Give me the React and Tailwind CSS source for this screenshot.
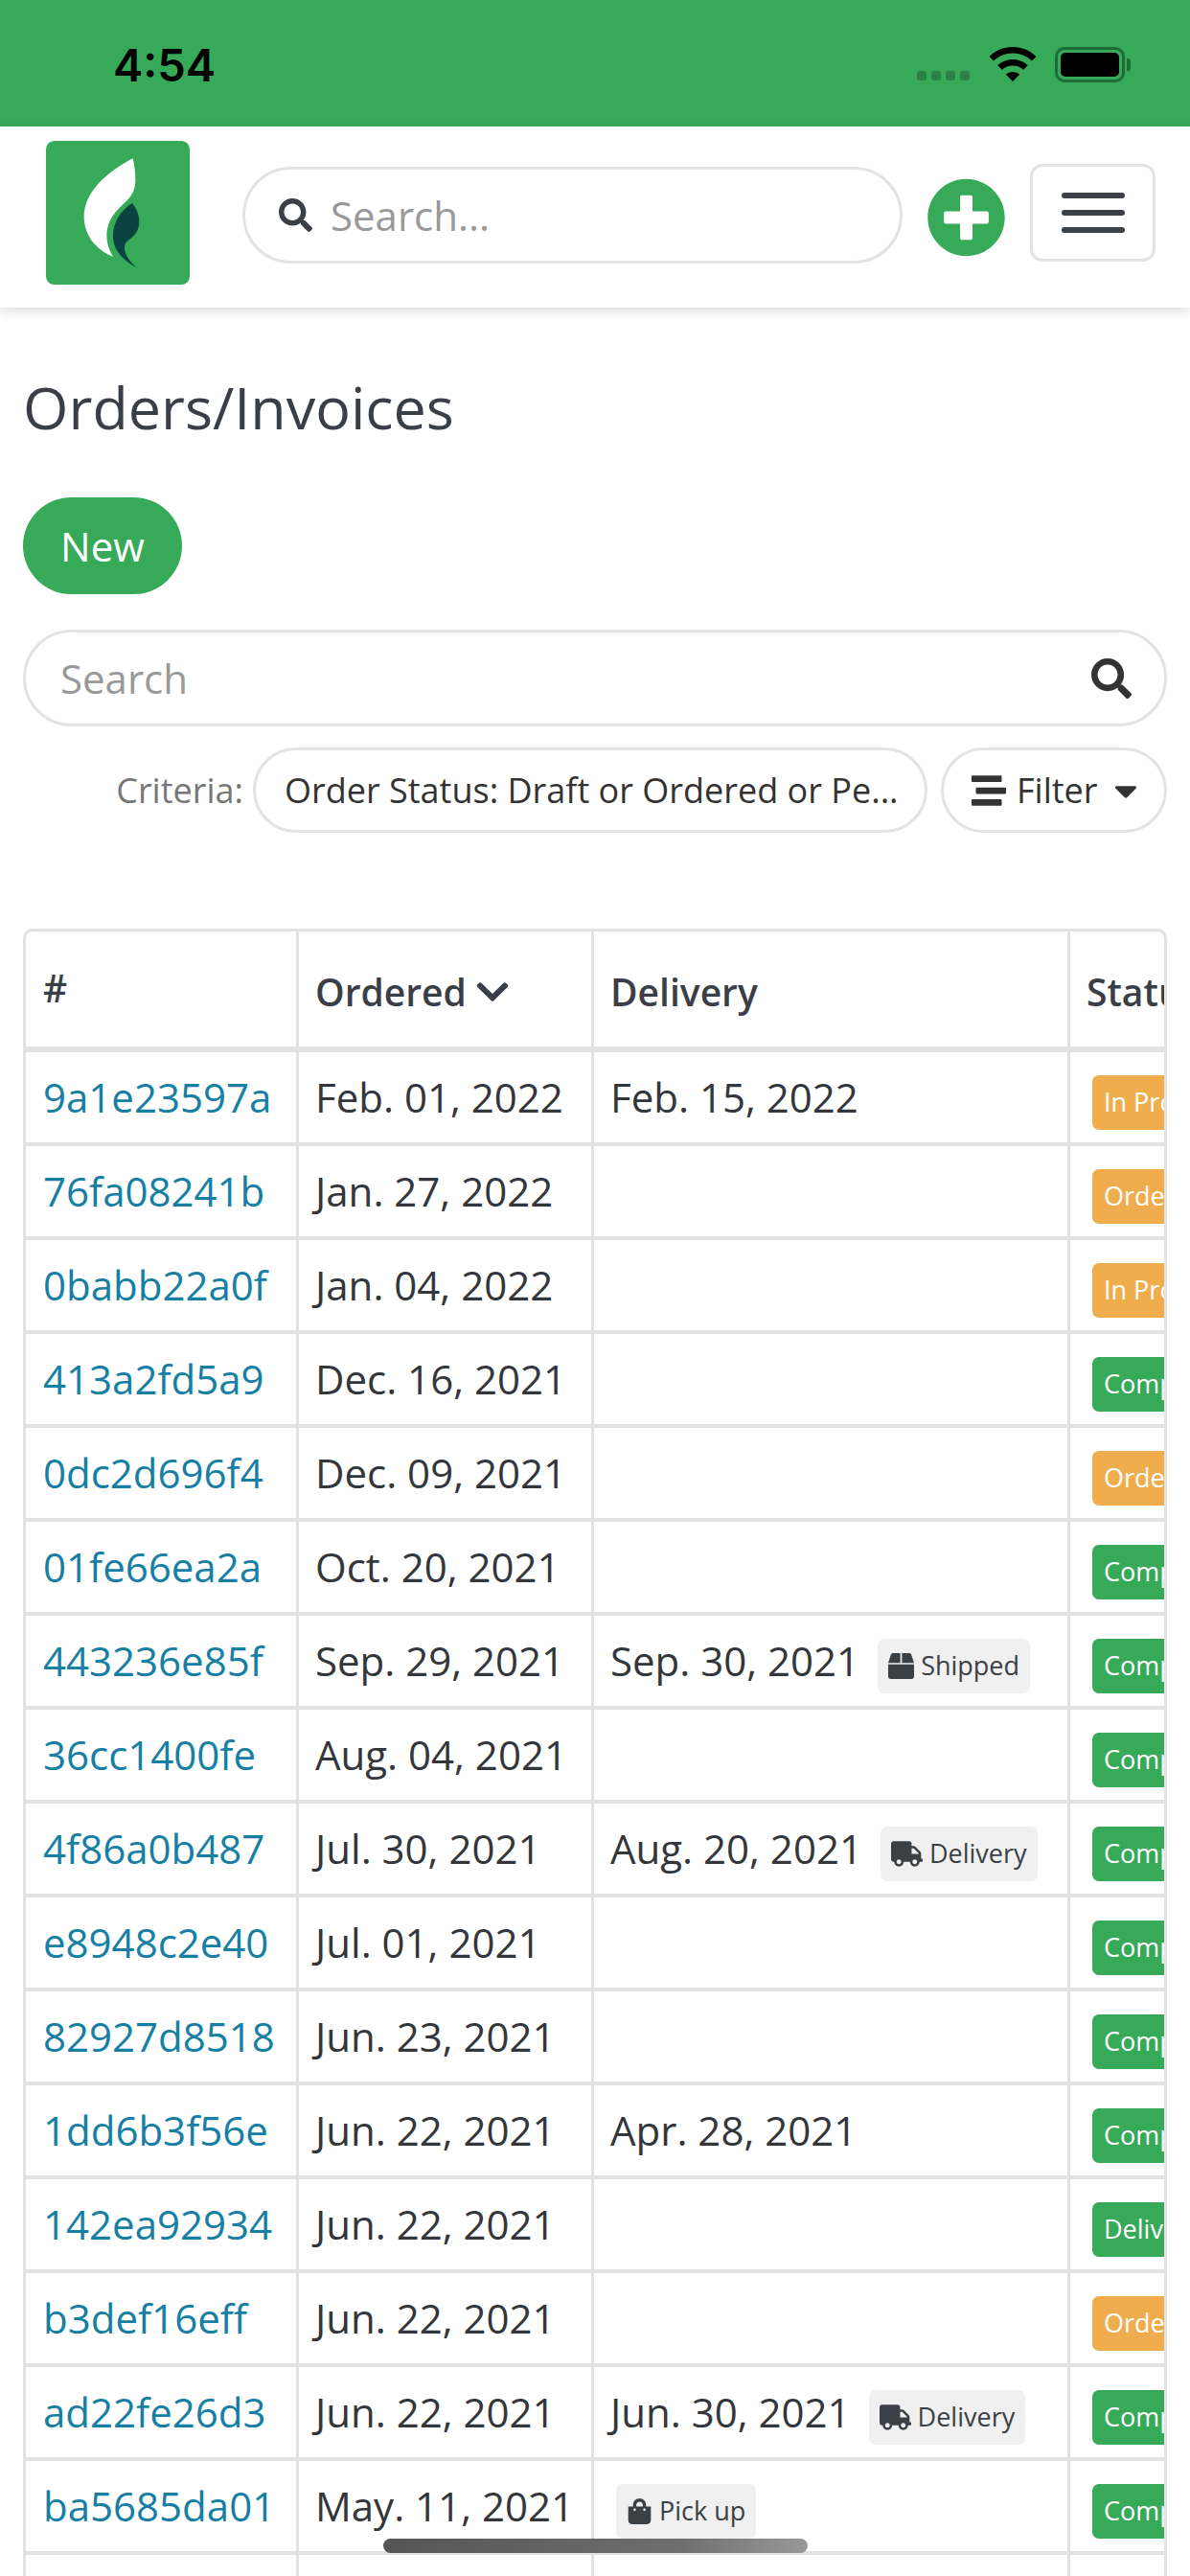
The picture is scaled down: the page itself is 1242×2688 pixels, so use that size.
import React from "react";
import { FaSearch, FaPlusCircle, FaBox, FaTruck, FaShoppingBag, FaStream, FaChevronDown, FaCaretDown } from "react-icons/fa";

const rows = [
  ["9a1e23597a", "Feb. 01, 2022", "Feb. 15, 2022", null, "In Progress"],
  ["76fa08241b", "Jan. 27, 2022", "", null, "Ordered"],
  ["0babb22a0f", "Jan. 04, 2022", "", null, "In Progress"],
  ["413a2fd5a9", "Dec. 16, 2021", "", null, "Completed"],
  ["0dc2d696f4", "Dec. 09, 2021", "", null, "Ordered"],
  ["01fe66ea2a", "Oct. 20, 2021", "", null, "Completed"],
  ["443236e85f", "Sep. 29, 2021", "Sep. 30, 2021", "Shipped", "Completed"],
  ["36cc1400fe", "Aug. 04, 2021", "", null, "Completed"],
  ["4f86a0b487", "Jul. 30, 2021", "Aug. 20, 2021", "Delivery", "Completed"],
  ["e8948c2e40", "Jul. 01, 2021", "", null, "Completed"],
  ["82927d8518", "Jun. 23, 2021", "", null, "Completed"],
  ["1dd6b3f56e", "Jun. 22, 2021", "Apr. 28, 2021", null, "Completed"],
  ["142ea92934", "Jun. 22, 2021", "", null, "Delivered"],
  ["b3def16eff", "Jun. 22, 2021", "", null, "Ordered"],
  ["ad22fe26d3", "Jun. 22, 2021", "Jun. 30, 2021", "Delivery", "Completed"],
  ["ba5685da01", "May. 11, 2021", "", "Pick up", "Completed"],
];

function Tag({ kind, alone }) {
  const Icon = kind === "Shipped" ? FaBox : kind === "Delivery" ? FaTruck : FaShoppingBag;
  const iconSize = kind === "Delivery" ? "text-[33px]" : "text-[27px]";
  return (
    <span className={`${alone ? "ml-[6px]" : "ml-[19px]"} mt-[12px] inline-flex h-[57px] items-center gap-[7px] rounded-[7px] bg-[#f0f0f0] px-[11px] text-[27px] text-[#3b3f46]`}>
      <Icon className={iconSize} />
      {kind}
    </span>
  );
}

function Status({ label }) {
  const color = label === "Ordered" || label === "In Progress" ? "bg-[#f0ad4e]" : "bg-[#36aa58]";
  return (
    <span className={`ml-[23px] mt-[10px] inline-flex h-[57px] w-[140px] shrink-0 items-center whitespace-nowrap rounded-[7px] pl-[12px] text-[27px] text-white ${color}`}>
      {label}
    </span>
  );
}

export default function App() {
  return (
    <div className="relative h-[2688px] w-[1242px] overflow-hidden bg-white text-[#33363b] [font-family:'Open_Sans',sans-serif]">
      <div className="flex h-[132px] items-start bg-[#36aa58]">
        <span className="ml-[118px] mt-[41px] text-[47px] font-semibold leading-[54px] text-black [font-family:Inter,sans-serif]">4:54</span>
        <div className="ml-auto mr-[62px] mt-[49px] flex items-start">
          <div className="mr-[20px] mt-[25px] flex gap-[5px]">
            <i className="h-[10px] w-[10px] rounded-[3px] bg-[#2c8047]" />
            <i className="h-[10px] w-[10px] rounded-[3px] bg-[#2c8047]" />
            <i className="h-[10px] w-[10px] rounded-[3px] bg-[#2c8047]" />
            <i className="h-[10px] w-[10px] rounded-[3px] bg-[#2c8047]" />
          </div>
          <svg width="50" height="37" viewBox="0 0 50 37" className="mr-[19px]">
            <path d="M25 0C15.5 0 7 3.6 0.5 10L5 14.5C10.5 9.4 17.5 6.5 25 6.5S39.500 9.400 45 14.500L49.500 10C43 3.600 34.500 0 25 0Z" />
            <path d="M25 13C19 13 13.500 15.300 9.300 19.200L13.800 23.700C16.900 21 20.800 19.500 25 19.500S33.100 21 36.200 23.700L40.700 19.200C36.500 15.300 31 13 25 13Z" />
            <path d="M25 26C22.300 26 19.800 27 17.900 28.800L25 36L32.100 28.800C30.200 27 27.700 26 25 26Z" />
          </svg>
          <div className="flex items-center">
            <div className="h-[37px] w-[73px] rounded-[10px] border-[3px] border-[#1e6b38] p-[3px]">
              <div className="h-full w-full rounded-[5px] bg-black" />
            </div>
            <div className="ml-[2px] h-[13px] w-[4px] rounded-r-[3px] bg-[#1e6b38]" />
          </div>
        </div>
      </div>

      <div className="relative flex h-[189px] items-start bg-white shadow-[0_3px_12px_rgba(40,50,60,0.18)]">
        <svg width="150" height="150" viewBox="144 81 450 450" className="ml-[48px] mt-[15px] shrink-0">
          <rect x="144" y="81" width="450" height="450" rx="26" fill="#36aa58" />
          <path fill="#fff" d="M416 136C340 175 262 240 263 320C264 380 305 425 355 444C325 400 325 340 370 295C400 265 425 250 424 200C424 175 420 155 416 136Z" />
          <path fill="#0b4341" d="M414 276C375 300 352 340 354 385C356 425 390 460 428 477C400 455 380 420 395 398C410 385 436 370 436 335C436 310 425 290 414 276Z" />
        </svg>
        <div className="ml-[55px] mt-[42px] flex h-[101px] w-[689px] shrink-0 items-center rounded-full border-[3px] border-[#e3e3e3] pl-[35px]">
          <FaSearch className="text-[35px] text-[#3b3f46]" />
          <span className="ml-[19px] text-[42px] text-[#999]">Search...</span>
        </div>
        <div className="ml-[25px] mt-[53px] flex h-[83px] w-[83px] shrink-0 items-center justify-center">
          <FaPlusCircle className="text-[84px] text-[#36aa58]" />
        </div>
        <div className="ml-[25px] mt-[39px] flex h-[102px] w-[131px] shrink-0 flex-col items-center justify-center gap-[12px] rounded-[13px] border-[3px] border-[#e3e3e3]">
          <i className="h-[6px] w-[66px] rounded-full bg-[#3b3f46]" />
          <i className="h-[6px] w-[66px] rounded-full bg-[#3b3f46]" />
          <i className="h-[6px] w-[66px] rounded-full bg-[#3b3f46]" />
        </div>
      </div>

      <div className="px-[24px]">
        <h1 className="mt-[59px] flex h-[90px] items-center text-[61px] font-normal text-[#3a3f47]">Orders/Invoices</h1>
        <button className="mt-[49px] flex h-[101px] w-[166px] items-center justify-center rounded-full bg-[#36aa58] text-[42px] text-white">New</button>
        <div className="mt-[37px] flex h-[101px] items-center justify-between rounded-full border-[3px] border-[#e3e3e3] pl-[36px] pr-[34px]">
          <span className="text-[42px] text-[#999]">Search</span>
          <FaSearch className="text-[42px] text-[#333]" />
        </div>
        <div className="mt-[22px] flex h-[89px] items-center justify-end">
          <span className="mr-[10px] text-[36px] text-[#777]">Criteria:</span>
          <div className="flex h-full w-[704px] items-center whitespace-nowrap rounded-full border-[3px] border-[#e3e3e3] pl-[30px] text-[36px] text-[#333]">
            Order Status: Draft or Ordered or Pe...
          </div>
          <div className="ml-[14px] flex h-full w-[236px] items-center rounded-full border-[3px] border-[#e3e3e3] pl-[29px] text-[36px] text-[#333]">
            <FaStream className="text-[36px]" />
            <span className="ml-[11px]">Filter</span>
            <FaCaretDown className="ml-[10px] text-[38px]" />
          </div>
        </div>

        <div className="mt-[100px] overflow-hidden rounded-t-[10px] border-x-[3px] border-t-[3px] border-[#e2e2e2]">
          <div className="flex h-[126px] border-b-[6px] border-[#e2e2e2] text-[39px] font-semibold text-[#3a3f47]">
            <div className="flex w-[285px] shrink-0 items-center border-r-[3px] border-[#e2e2e2] pb-[2px] pl-[18px]">#</div>
            <div className="flex w-[308px] shrink-0 items-center border-r-[3px] border-[#e2e2e2] pl-[17px] pt-[6px]">
              Ordered
              <FaChevronDown className="ml-[8px] text-[38px]" />
            </div>
            <div className="flex w-[497px] shrink-0 items-center border-r-[3px] border-[#e2e2e2] pl-[17px] pt-[6px]">Delivery</div>
            <div className="flex min-w-0 flex-1 items-center overflow-hidden whitespace-nowrap pl-[17px] pt-[6px]">Status</div>
          </div>
          {rows.map((r) => (
            <div key={r[0]} className="flex h-[98px] border-b-[4px] border-[#e2e2e2] text-[42px]">
              <div className="flex w-[285px] shrink-0 items-center border-r-[3px] border-[#e2e2e2] pb-[2px] pl-[18px] text-[#167fa3]">{r[0]}</div>
              <div className="flex w-[308px] shrink-0 items-center whitespace-nowrap border-r-[3px] border-[#e2e2e2] pb-[2px] pl-[17px]">{r[1]}</div>
              <div className="flex w-[497px] shrink-0 items-center whitespace-nowrap border-r-[3px] border-[#e2e2e2] pb-[2px] pl-[17px]">
                {r[2]}
                {r[3] && <Tag kind={r[3]} alone={!r[2]} />}
              </div>
              <div className="flex min-w-0 flex-1 items-center overflow-hidden">
                <Status label={r[4]} />
              </div>
            </div>
          ))}
          <div className="flex h-[98px]">
            <div className="w-[285px] shrink-0 border-r-[3px] border-[#e2e2e2]" />
            <div className="w-[308px] shrink-0 border-r-[3px] border-[#e2e2e2]" />
            <div className="w-[497px] shrink-0 border-r-[3px] border-[#e2e2e2]" />
          </div>
        </div>
      </div>

      <div className="absolute left-[400px] top-[2649px] h-[15px] w-[443px] rounded-full bg-[linear-gradient(90deg,#555,#6e6e6e_70%,#999)]" />
    </div>
  );
}
